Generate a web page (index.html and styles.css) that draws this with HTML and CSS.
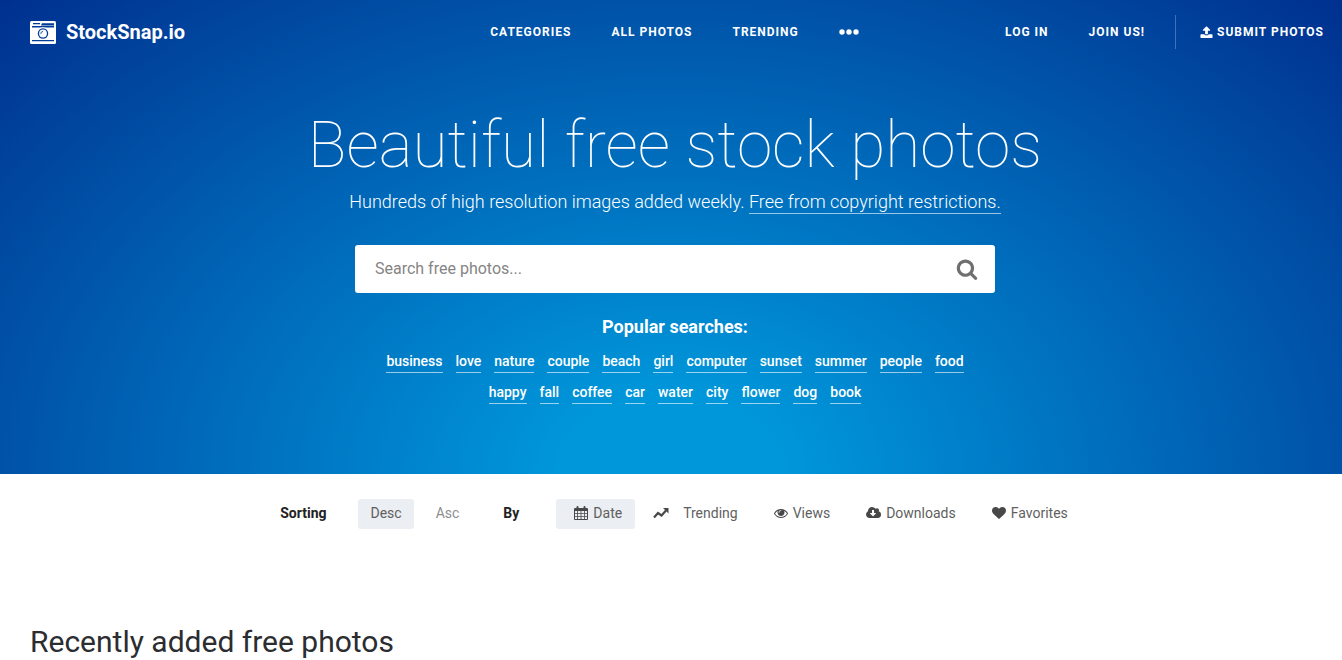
FILE: index.html
```html
<!DOCTYPE html>
<html lang="en">
<head>
<meta charset="utf-8">
<title>StockSnap.io - Beautiful free stock photos</title>
<link rel="stylesheet" href="styles.css">
</head>
<body>
<header class="hero">
  <nav class="nav">
    <a class="logo" href="#">
      <svg class="logo-icon" viewBox="0 0 26 23" aria-hidden="true">
        <rect width="26" height="23" rx="1.500" fill="#fff"/>
        <path d="M3 2h7v1.200H3zM12 2.200h12v2.300H11zM2 5h22v1.400H2zM2 19h22v1.300H2z" fill="#003b98"/>
        <circle cx="13" cy="12.500" r="6.300" fill="#fff"/>
        <circle cx="13" cy="12.500" r="5.200" fill="#003b98"/>
        <circle cx="13" cy="12.500" r="3.900" fill="#fff"/>
        <path d="M10.800 13a2.400 2.400 0 0 1 2.400-2.600" fill="none" stroke="#003b98" stroke-width="0.800"/>
      </svg>
      StockSnap.io
    </a>
    <div class="nav-main">
      <a href="#">CATEGORIES</a>
      <a href="#">ALL PHOTOS</a>
      <a href="#">TRENDING</a>
      <button class="more" aria-label="More">
        <svg viewBox="0 0 20 6" aria-hidden="true"><circle cx="3" cy="3" r="2.700"/><circle cx="10" cy="3" r="2.700"/><circle cx="17" cy="3" r="2.700"/></svg>
      </button>
    </div>
    <div class="nav-user">
      <a href="#">LOG IN</a>
      <a href="#">JOIN US!</a>
      <a class="submit" href="#">
        <svg viewBox="0 0 1792 1792" aria-hidden="true"><path d="M1728 1248v320q0 40-28 68t-68 28H160q-40 0-68-28t-28-68v-320q0-40 28-68t68-28h427q21 56 70.500 92t110.500 36h256q61 0 110.500-36t70.500-92h427q40 0 68 28t28 68zm-325-648q-17 40-59 40h-256v448q0 26-19 45t-45 19H768q-26 0-45-19t-19-45V640H448q-42 0-59-40-17-39 14-69l448-448q18-19 45-19t45 19l448 448q31 30 14 69z"/></svg>
        SUBMIT PHOTOS
      </a>
    </div>
  </nav>
  <div class="hero-content">
    <h1>Beautiful free stock photos</h1>
    <p class="tagline">Hundreds of high resolution images added weekly. <a href="#">Free from copyright restrictions.</a></p>
    <form class="search">
      <input type="text" placeholder="Search free photos..." aria-label="Search free photos">
      <button type="button" aria-label="Search">
        <svg viewBox="0 0 1792 1792" aria-hidden="true"><path d="M1216 832q0-185-131.500-316.500T768 384 451.500 515.500 320 832t131.500 316.500T768 1280t316.500-131.500T1216 832zm512 832q0 52-38 90t-90 38q-54 0-90-38l-343-342q-179 124-399 124-143 0-273.500-55.500t-225-150-150-225T64 832t55.500-273.500 150-225 225-150T768 128t273.500 55.500 225 150 150 225T1472 832q0 220-124 399l343 343q37 37 37 90z"/></svg>
      </button>
    </form>
    <h2 class="popular-title">Popular searches:</h2>
    <div class="tags">
      <a href="#">business</a><a href="#">love</a><a href="#">nature</a><a href="#">couple</a><a href="#">beach</a><a href="#">girl</a><a href="#">computer</a><a href="#">sunset</a><a href="#">summer</a><a href="#">people</a><a href="#">food</a><a href="#">happy</a><a href="#">fall</a><a href="#">coffee</a><a href="#">car</a><a href="#">water</a><a href="#">city</a><a href="#">flower</a><a href="#">dog</a><a href="#">book</a>
    </div>
  </div>
</header>
<main>
  <div class="sorting">
    <strong>Sorting</strong>
    <div class="order">
      <button class="active">Desc</button>
      <button class="muted">Asc</button>
    </div>
    <strong>By</strong>
    <div class="criteria">
      <button class="date active">
        <svg viewBox="0 0 14 14" aria-hidden="true"><path fill-rule="evenodd" d="M1 2h1.500V1a1 1 0 0 1 2 0v1h5V1a1 1 0 0 1 2 0v1H13a1 1 0 0 1 1 1v10a1 1 0 0 1-1 1H1a1 1 0 0 1-1-1V3a1 1 0 0 1 1-1zM1 5v2h2.200V5zM4 5v2h2.600V5zM7.400 5v2H10V5zM10.800 5v2H13V5zM1 7.800v2.100h2.200V7.800zM4 7.800v2.100h2.600V7.800zM7.400 7.800v2.100H10V7.800zM10.800 7.800v2.100H13V7.800zM1 10.700V13h2.200v-2.300zM4 10.700V13h2.600v-2.300zM7.400 10.700V13H10v-2.300zM10.800 10.700V13H13v-2.300z"/></svg>
        Date
      </button>
      <button class="trending">
        <svg viewBox="0 0 16 12" aria-hidden="true"><path d="M1 10.500l4-4.500 3.500 2.500L13 3.500" fill="none" stroke="#484848" stroke-width="2.200"/><path d="M10 1h5.500v5.500z"/></svg>
        Trending
      </button>
      <button>
        <svg viewBox="0 0 1792 1792" aria-hidden="true"><path d="M1664 960q-152-236-381-353 61 104 61 225 0 185-131.500 316.500T896 1280t-316.500-131.500T448 832q0-121 61-225-229 117-381 353 133 205 333.500 326.500T896 1408t434.500-121.500T1664 960zM944 576q0-20-14-34t-34-14q-125 0-214.500 89.500T592 832q0 20 14 34t34 14 34-14 14-34q0-86 61-147t147-61q20 0 34-14t14-34zm848 384q0 34-20 69-140 230-376.500 368.500T896 1536t-499.500-139T20 1029q-20-35-20-69t20-69q140-229 376.500-368T896 384t499.500 139T1772 891q20 35 20 69z"/></svg>
        Views
      </button>
      <button>
        <svg class="wide" viewBox="0 0 1920 1792" aria-hidden="true"><path d="M1280 928q0-14-9-23t-23-9h-224V544q0-13-9.500-22.500T992 512H800q-13 0-22.500 9.500T768 544v352H544q-13 0-22.500 9.500T512 928q0 14 9 23l352 352q9 9 23 9t23-9l351-351q10-12 10-24zm640 224q0 159-112.500 271.500T1536 1536H448q-185 0-316.500-131.500T0 1088q0-130 70-240t188-165q-2-30-2-43 0-212 150-362t362-150q156 0 285.500 87T1242 346q71-62 166-62 106 0 181 75t75 181q0 76-41 138 130 31 213.500 135.500T1920 1152z"/></svg>
        Downloads
      </button>
      <button>
        <svg viewBox="0 0 1792 1792" aria-hidden="true"><path d="M896 1664q-26 0-44-18l-624-602q-10-8-27.500-26T145 952.500 77 855 23.500 734 0 596q0-220 127-344t351-124q62 0 126.500 21.500t120 58T820 276t76 68q36-36 76-68t95.500-68.500 120-58T1314 128q224 0 351 124t127 344q0 221-229 450l-623 600q-18 18-44 18z"/></svg>
        Favorites
      </button>
    </div>
  </div>
  <h2 class="recent">Recently added free photos</h2>
</main>
</body>
</html>
```
FILE: styles.css
```css
* { box-sizing: border-box; }
body { margin: 0; font-family: Roboto, "Liberation Sans", sans-serif; color: #2b2d30; background: #fff; overflow-x: hidden; }
a { color: inherit; text-decoration: none; }
button { font: inherit; color: inherit; border: 0; background: none; padding: 0; cursor: pointer; }
svg { fill: currentColor; display: block; flex: none; }

.hero { padding-bottom: 70px; color: #fff; background: radial-gradient(ellipse at bottom, #0096da 12%, #00308f 100%); }
.nav { display: grid; grid-template-columns: 1fr auto 1fr; align-items: center; height: 64px; padding: 0 18px 0 30px; font-size: 12px; font-weight: 700; letter-spacing: 1px; }
.logo { display: flex; align-items: center; gap: 10px; font-size: 20px; line-height: 24px; letter-spacing: 0; }
.logo-icon { width: 26px; height: 23px; }
.nav-main { display: flex; align-items: center; gap: 40px; margin-right: 5px; }
.more svg { width: 20px; height: 6px; }
.nav-user { display: flex; align-items: center; justify-content: flex-end; }
.nav-user a { margin-left: 40px; }
.nav-user .submit { display: flex; align-items: center; gap: 4px; height: 34px; margin-left: 30px; padding-left: 24px; border-left: 1px solid rgba(255,255,255,.25); }
.submit svg { width: 13px; height: 13px; }

.hero-content { display: flex; flex-direction: column; align-items: center; padding: 42px 0 0 8px; text-align: center; }
h1 { margin: 0; font-size: 64px; font-weight: 100; line-height: 80px; }
.tagline { margin: 4px 0 0; font-size: 18px; font-weight: 300; line-height: 23px; }
.tagline a { display: inline-block; border-bottom: 1px solid rgba(255,255,255,.6); }
.search { display: flex; width: 640px; max-width: 100%; height: 48px; margin: 31px 0 0; background: #fff; border-radius: 3px; }
.search input { flex: 1; border: 0; background: none; padding: 0 20px 2px; font: 400 16px Roboto, sans-serif; color: #333; outline: 0; }
.search input::placeholder { color: #858585; }
.search button { width: 56px; display: grid; place-items: center; color: #6f6f6f; }
.search button svg { width: 22px; height: 24px; }
.popular-title { margin: 22px 0 0; font-size: 18px; font-weight: 700; line-height: 24px; }
.tags { display: flex; flex-wrap: wrap; justify-content: center; width: 600px; margin-top: 11px; gap: 8px 13px; font-size: 14px; font-weight: 500; line-height: 22px; }
.tags a { border-bottom: 1px solid rgba(255,255,255,.6); }

.sorting { display: flex; justify-content: center; align-items: center; padding: 25px 0 0 6px; font-size: 14px; line-height: 28px; color: #5f5f5f; }
.sorting strong { color: #222; font-weight: 700; }
.order { display: flex; margin: 0 32px; }
.sorting button { display: flex; align-items: center; gap: 5px; height: 30px; padding: 0 12px 2px; border-radius: 3px; }
.sorting strong { padding-bottom: 2px; }
.sorting .active { background: #ebeef2; }
.order .muted { color: #8e8e8e; padding-left: 22px; padding-right: 0; margin-right: 12px; }
.criteria { display: flex; margin-left: 37px; }
.criteria svg { width: 14px; height: 14px; color: #484848; }
.criteria .wide { width: 15px; }
.criteria button { padding-left: 18px; padding-right: 18px; }
.criteria .date { padding-right: 13px; }
.criteria .trending { gap: 14px; }
.criteria .trending svg { width: 16px; height: 12px; }
.criteria button:last-child { padding-right: 0; }
.recent { margin: 93px 30px 16px; font-size: 30px; font-weight: 400; line-height: 40px; }
```
